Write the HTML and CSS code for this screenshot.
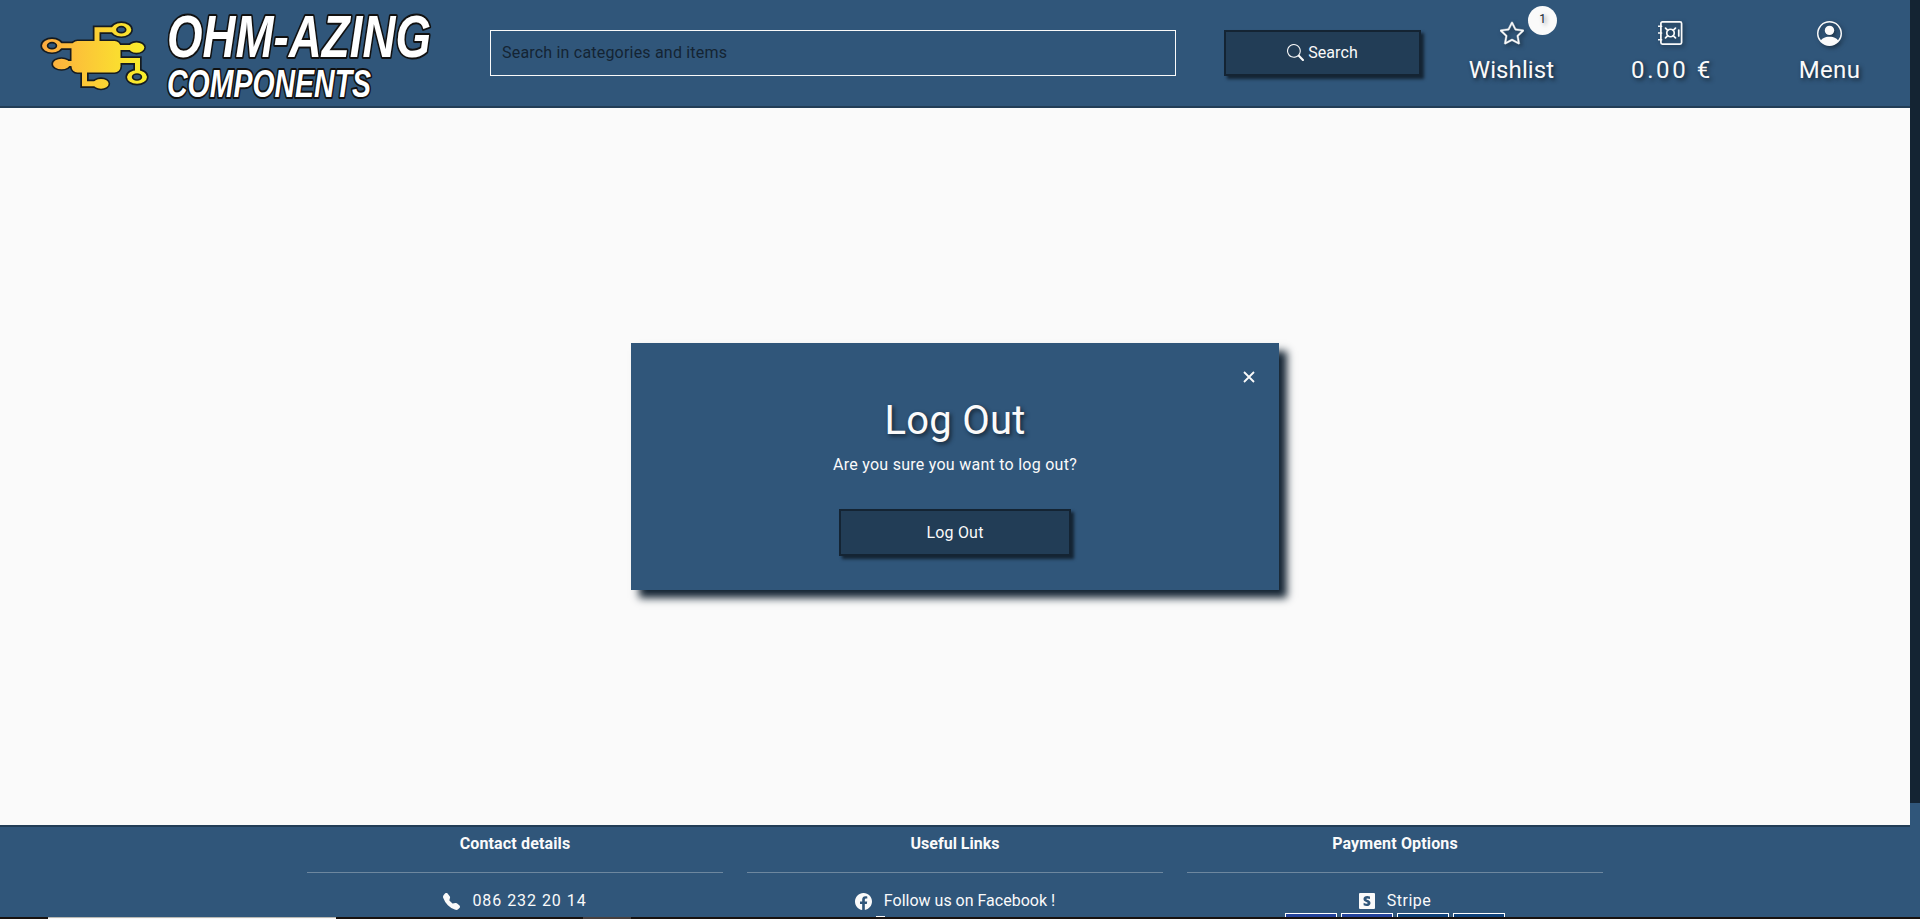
FILE: index.html
```html
<!DOCTYPE html>
<html lang="en">
<head>
<meta charset="utf-8">
<title>Ohm-azing Components - Log Out</title>
<link rel="stylesheet" href="styles.css">
</head>
<body>
<div class="window">
  <div class="page">
    <header class="header">
      <svg class="logo" width="490" height="106" viewBox="0 0 490 106">
        <defs>
          <linearGradient id="gold" gradientUnits="userSpaceOnUse" x1="41" y1="0" x2="148" y2="0"><stop offset="0" stop-color="#fdaa40"/><stop offset="1" stop-color="#f9f02a"/></linearGradient>
          <g id="pads">
            <rect x="71.500" y="41" width="49" height="31.500" rx="6"/>
            <ellipse cx="52" cy="45.700" rx="10" ry="6.800"/><ellipse cx="61.500" cy="64" rx="8.500" ry="5.200"/>
            <ellipse cx="121.300" cy="29.700" rx="10" ry="6.800"/><ellipse cx="136.500" cy="47.600" rx="7.800" ry="5.200"/>
            <ellipse cx="137" cy="77" rx="10" ry="6.800"/><ellipse cx="101" cy="83.800" rx="7.600" ry="4.900"/>
          </g>
          <path id="traces" fill="none" d="M76 45.710L60 45.700M76 63.510L66 63.500M97 44V29.700H113M118 47.500L130 47.510M118 60.500H137.500V72M84.500 70V83.700H96"/>
        </defs>
        <g fill="#151b20" stroke="#151b20"><use href="#pads" stroke-width="3.200"/><use href="#traces" stroke-width="8.400"/></g>
        <use href="#pads" fill="url(#gold)"/>
        <use href="#traces" stroke="url(#gold)" stroke-width="5"/>
        <g fill="#30567a" stroke="#151b20" stroke-width="1.700">
          <ellipse cx="52" cy="45.700" rx="4.400" ry="3"/><ellipse cx="121.300" cy="29.700" rx="4.400" ry="3"/><ellipse cx="137" cy="77" rx="4.400" ry="3"/>
        </g>
        <g class="wordmark">
          <text x="167" y="56.500" font-size="59" textLength="264" lengthAdjust="spacingAndGlyphs">OHM-AZING</text>
          <text x="167" y="96.500" font-size="39" textLength="204" lengthAdjust="spacingAndGlyphs">COMPONENTS</text>
        </g>
      </svg>
      <input class="search-input" type="text" placeholder="Search in categories and items">
      <button class="btn search-btn"><svg width="17" height="17" viewBox="0 0 16 16" fill="currentColor"><path d="M11.742 10.344a6.500 6.500 0 1 0-1.397 1.398h-.001c.03.04.062.078.098.115l3.850 3.850a1 1 0 0 0 1.415-1.414l-3.850-3.850a1.007 1.007 0 0 0-.115-.1zM12 6.500a5.500 5.500 0 1 1-11 0 5.500 5.500 0 0 1 11 0z"/></svg><span>Search</span></button>
      <nav class="nav">
        <a class="nav-item">
          <svg width="24" height="24" viewBox="0 0 16 16" fill="currentColor" stroke="currentColor" stroke-width=".25"><path d="M2.866 14.850c-.078.444.36.791.746.593l4.390-2.256 4.389 2.256c.386.198.824-.149.746-.592l-.83-4.730 3.522-3.356c.33-.314.16-.888-.282-.95l-4.898-.696L8.465.792a.513.513 0 0 0-.927 0L5.354 5.120l-4.898.696c-.441.062-.612.636-.283.950l3.523 3.356-.83 4.730zm4.905-2.767-3.686 1.894.694-3.957a.565.565 0 0 0-.163-.505L1.710 6.745l4.052-.576a.525.525 0 0 0 .393-.288L8 2.223l1.847 3.658a.525.525 0 0 0 .393.288l4.052.575-2.906 2.770a.565.565 0 0 0-.163.506l.694 3.957-3.686-1.894a.503.503 0 0 0-.461 0z"/></svg>
          <span class="wish">Wishlist</span><span class="badge">1</span>
        </a>
        <a class="nav-item">
          <svg width="25" height="24" viewBox="0 0 16 16" fill="none" stroke="currentColor" stroke-width="1.150"><rect x="1.600" y=".6" width="13.800" height="14.800" rx="1"/><path d="M0 3.500h2M0 8h2M0 12.500h2M13.500 6v4M4.700 4.700l1.500 1.500M11.300 4.700L9.800 6.200M4.700 11.300l1.500-1.500M11.300 11.300L9.800 9.800" stroke-linecap="round"/><circle cx="8" cy="8" r="2.500"/></svg>
          <span class="total">0.00 €</span>
        </a>
        <a class="nav-item">
          <svg width="25" height="25" viewBox="0 0 16 16" fill="currentColor"><path d="M11 6a3 3 0 1 1-6 0 3 3 0 0 1 6 0z"/><path fill-rule="evenodd" d="M0 8a8 8 0 1 1 16 0A8 8 0 0 1 0 8zm8-7a7 7 0 0 0-5.468 11.370C3.242 11.226 4.805 10 8 10s4.757 1.225 5.468 2.370A7 7 0 0 0 8 1z"/></svg>
          <span class="menu">Menu</span>
        </a>
      </nav>
    </header>
    <main class="main">
      <section class="dialog">
        <div class="dialog-top"><svg class="close" width="12" height="12" viewBox="0 0 12 12"><path d="M1 1l10 10M11 1L1 11"/></svg></div>
        <h1>Log Out</h1>
        <p>Are you sure you want to log out?</p>
        <button class="btn logout">Log Out</button>
      </section>
    </main>
    <footer class="footer">
      <div class="col">
        <h2 class="wide">Contact details</h2>
        <div class="link"><svg width="17" height="17" viewBox="0 0 16 16" fill="currentColor"><path fill-rule="evenodd" d="M1.885.511a1.745 1.745 0 0 1 2.610.163L6.290 2.980c.329.423.445.974.315 1.494l-.547 2.190a.678.678 0 0 0 .178.643l2.457 2.457a.678.678 0 0 0 .644.178l2.189-.547a1.745 1.745 0 0 1 1.494.315l2.306 1.794c.829.645.905 1.870.163 2.611l-1.034 1.034c-.74.740-1.846 1.065-2.877.702a18.634 18.634 0 0 1-7.010-4.420 18.634 18.634 0 0 1-4.420-7.009c-.362-1.030-.037-2.137.703-2.877L1.885.511z"/></svg><span class="phone">086 232 20 14</span></div>
      </div>
      <div class="col">
        <h2>Useful Links</h2>
        <div class="link"><svg width="17" height="17" viewBox="0 0 16 16" fill="currentColor"><path d="M16 8.049c0-4.446-3.582-8.050-8-8.050C3.580 0-.002 3.603-.002 8.050c0 4.017 2.926 7.347 6.750 7.951v-5.625h-2.030V8.050H6.750V6.275c0-2.017 1.195-3.131 3.022-3.131.876 0 1.791.157 1.791.157v1.980h-1.009c-.993 0-1.303.621-1.303 1.258v1.510h2.218l-.354 2.326H9.250V16c3.824-.604 6.750-3.934 6.750-7.951z"/></svg><span>Follow us on Facebook !</span></div>
        <div class="next-icon"></div>
      </div>
      <div class="col">
        <h2 class="wide">Payment Options</h2>
        <div class="link"><svg width="16" height="16" viewBox="0 0 16 16" fill="currentColor"><path d="M1 0a1 1 0 0 0-1 1v14a1 1 0 0 0 1 1h14a1 1 0 0 0 1-1V1a1 1 0 0 0-1-1H1zm7.226 5.385c-.584 0-.937.164-.937.593 0 .468.607.674 1.360.930 1.228.415 2.844.963 2.851 2.993C11.500 11.868 9.924 13 7.630 13a7.662 7.662 0 0 1-3.009-.626V9.758c.926.506 2.095.880 3.010.880.617 0 1.058-.165 1.058-.671 0-.518-.658-.755-1.453-1.041C6.026 8.490 4.500 7.940 4.500 6.110 4.500 4.165 5.988 3 8.226 3a7.290 7.290 0 0 1 2.734.505v2.583c-.838-.450-1.896-.703-2.734-.703z"/></svg><span class="stripe">Stripe</span></div>
        <div class="cards"><i></i><i></i><i class="deep"></i><i class="deep"></i></div>
      </div>
    </footer>
  </div>
  <div class="scrollbar"><div class="thumb"></div></div>
</div>
<div class="taskbar"><div class="task-search"></div><div class="task-active"></div></div>
</body>
</html>
```
FILE: styles.css
```css
*{box-sizing:border-box}
body{margin:0;width:1920px;height:919px;overflow:hidden;background:#fafafa;color:#fafafa;font:16px/24px Roboto,sans-serif}
svg{display:block;flex:none}
.window{display:flex;height:917px}
.page{width:1910px;height:917px;display:flex;flex-direction:column;overflow:hidden}
.header{flex:none;display:flex;align-items:flex-start;height:108px;background:#30567a;border-bottom:2px solid #223d56}
.wordmark{font-family:"Liberation Sans",sans-serif;font-weight:700;font-style:italic;fill:#fff;stroke:#111;stroke-width:4px;stroke-linejoin:round;paint-order:stroke}
.search-input{width:686px;height:46px;margin:30px 48px 0 0;padding:0 12px 2px 11px;border:1px solid #fafafa;border-radius:0;background:none;font:16px Roboto,sans-serif;letter-spacing:.2px}
.search-input::placeholder{color:#142433;opacity:1}
.btn{display:flex;align-items:center;justify-content:center;height:46px;padding:0;border:2px solid #142433;background:#223d56;color:#fafafa;box-shadow:3px 3px 3px #142433;font:16px Roboto,sans-serif}
.search-btn{width:197px;margin:30px 11px 0 0;padding-bottom:2px;gap:4px;letter-spacing:.1px}
.nav{display:flex}
.nav-item{position:relative;width:159px;height:106px;padding-top:21px;display:grid;grid-template-rows:25px 32px;justify-items:center;align-content:start;gap:8px;font-size:24px;line-height:32px;text-shadow:2px 2px 4px #142433}
.nav-item svg{filter:drop-shadow(2px 2px 2px rgba(20,36,51,.75))}
.wish{letter-spacing:.1px}
.total{letter-spacing:2.6px;margin-right:-3px}
.menu{letter-spacing:.3px}
.badge{position:absolute;left:96px;top:6px;width:29px;height:29px;border-radius:50%;background:#fafafa;color:#142433;font-size:12px;line-height:27px;text-align:center;text-shadow:2px 2px 4px rgba(20,36,51,.6)}
.main{height:717px;flex:none;display:flex;justify-content:center;align-items:flex-start;padding-top:235px}
.dialog{width:648px;height:247px;background:#30567a;display:flex;flex-direction:column;align-items:center;box-shadow:8px 8px 8px #142433}
.dialog-top{align-self:stretch;height:54px;padding:28px 24px 0 0;display:flex;justify-content:flex-end}
.close{fill:none;stroke:#fafafa;stroke-width:1.8}
h1{margin:0;font-weight:400;font-size:40px;line-height:48px;letter-spacing:.25px;text-shadow:2px 2px 4px #142433}
p{margin:8px 0 0;line-height:24px;letter-spacing:.26px}
.logout{width:232px;height:47px;margin-top:32px;letter-spacing:.2px}
.footer{flex:none;height:92px;background:#30567a;border-top:2px solid #223d56;display:flex;justify-content:center;gap:24px}
.col{width:416px;flex:none;display:flex;flex-direction:column;align-items:center}
.col>*{flex:none}
h2{align-self:stretch;height:46px;margin:0;padding-top:5px;text-align:center;font-size:16px;line-height:24px;font-weight:700;border-bottom:1px solid #6d879f}
.wide{letter-spacing:.15px}
.link{display:flex;align-items:center;gap:12px;height:24px;margin-top:16px}
.phone{letter-spacing:.95px}
.stripe{letter-spacing:.5px}
.next-icon{width:9px;height:3px;margin:3px 73px 0 -76px;background:#fafafa}
.cards{display:flex;gap:4px}
.cards i{width:52px;height:30px;border:1px solid #fff;background:#24439b}
.cards .deep{background:#10427a}
.scrollbar{width:10px;background:#30567a}
.thumb{height:803px;background:#142433}
.taskbar{height:2px;display:flex;background:#18120f}
.task-search{width:288px;height:2px;margin-left:48px;background:#f8f8f8;border-top:1px solid #b9b9b4}
.task-active{width:48px;margin-left:247px;background:#48403e}
```
